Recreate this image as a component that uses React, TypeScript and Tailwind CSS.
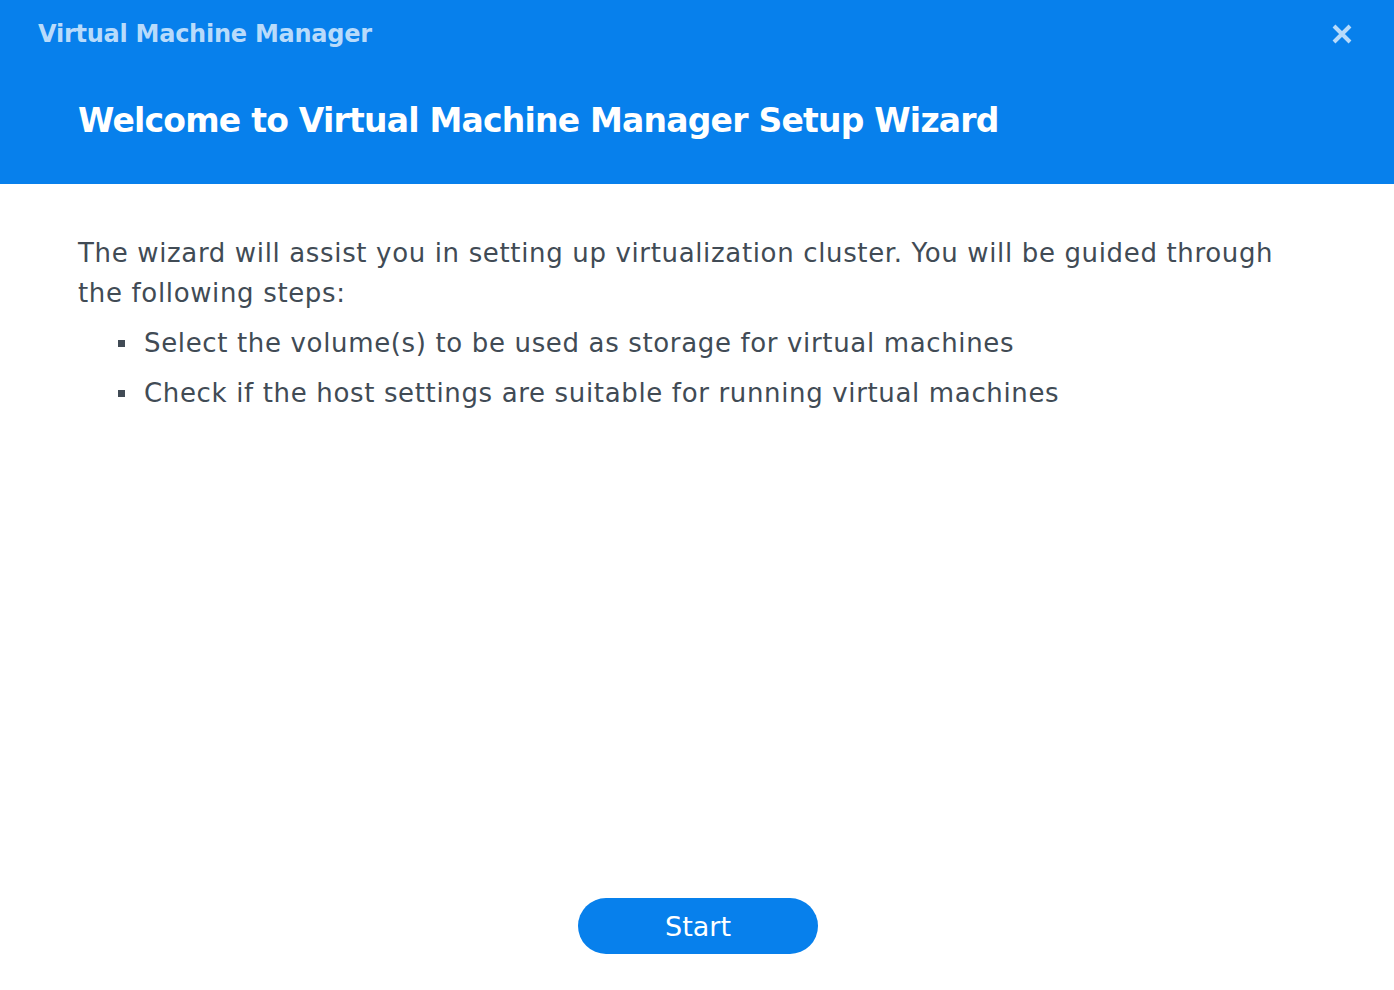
import React from "react";

export default function App() {
  return (
    <div
      className="w-[1394px] h-[990px] bg-white flex flex-col text-[#414b55]"
      style={{ fontFamily: '"DejaVu Sans", Verdana, sans-serif' }}
    >
      <header className="h-[184px] bg-[#0780ec] flex flex-col">
        <div className="flex items-center justify-between pl-[38px] pr-[41px] h-[66px]">
          <span className="text-[24px] font-bold text-[#b8dbfb] leading-none tracking-[-0.25px] mt-[2px]">
            Virtual Machine Manager
          </span>
          <svg width="22" height="22" viewBox="0 0 22 22" className="mt-[2px]">
            <path
              d="M3 3 L19 19 M19 3 L3 19"
              stroke="#b8dbfb"
              strokeWidth="4"
              strokeLinecap="butt"
            />
          </svg>
        </div>
        <h1 className="pl-[78px] pt-[38px] text-[33px] font-bold text-white leading-none tracking-[-0.78px]">
          Welcome to Virtual Machine Manager Setup Wizard
        </h1>
      </header>

      <main className="flex-1 flex flex-col px-[78px] pt-[49px]">
        <p className="text-[26px] leading-[40px] tracking-[0.65px]">
          The wizard will assist you in setting up virtualization cluster. You will be guided through
          the following steps:
        </p>
        <ul className="mt-[10px] pl-[40px] flex flex-col gap-[10px]">
          <li className="flex items-center gap-[19px] text-[26px] leading-[40px] tracking-[0.65px]">
            <span className="w-[7px] h-[7px] bg-[#414b55] shrink-0" />
            Select the volume(s) to be used as storage for virtual machines
          </li>
          <li className="flex items-center gap-[19px] text-[26px] leading-[40px] tracking-[0.65px]">
            <span className="w-[7px] h-[7px] bg-[#414b55] shrink-0" />
            Check if the host settings are suitable for running virtual machines
          </li>
        </ul>
        <div className="flex-1" />
        <div className="flex justify-center pb-[36px] pl-[2px]">
          <button className="w-[240px] h-[56px] rounded-full bg-[#0780ec] text-white text-[27px] pt-[2px]">
            Start
          </button>
        </div>
      </main>
    </div>
  );
}
